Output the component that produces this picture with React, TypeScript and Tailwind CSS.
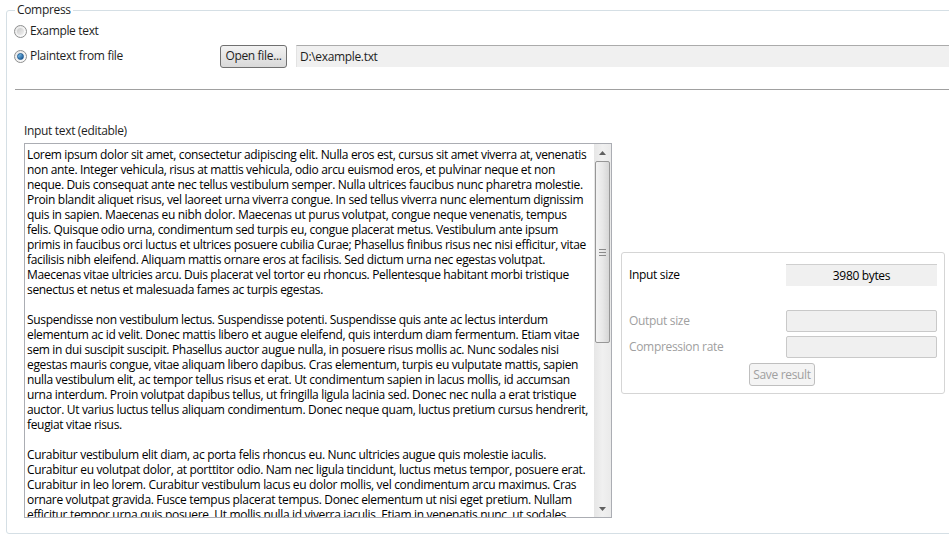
import React from "react";

const lines1 = [
  "Lorem ipsum dolor sit amet, consectetur adipiscing elit. Nulla eros est, cursus sit amet viverra at, venenatis",
  "non ante. Integer vehicula, risus at mattis vehicula, odio arcu euismod eros, et pulvinar neque et non",
  "neque. Duis consequat ante nec tellus vestibulum semper. Nulla ultrices faucibus nunc pharetra molestie.",
  "Proin blandit aliquet risus, vel laoreet urna viverra congue. In sed tellus viverra nunc elementum dignissim",
  "quis in sapien. Maecenas eu nibh dolor. Maecenas ut purus volutpat, congue neque venenatis, tempus",
  "felis. Quisque odio urna, condimentum sed turpis eu, congue placerat metus. Vestibulum ante ipsum",
  "primis in faucibus orci luctus et ultrices posuere cubilia Curae; Phasellus finibus risus nec nisi efficitur, vitae",
  "facilisis nibh eleifend. Aliquam mattis ornare eros at facilisis. Sed dictum urna nec egestas volutpat.",
  "Maecenas vitae ultricies arcu. Duis placerat vel tortor eu rhoncus. Pellentesque habitant morbi tristique",
  "senectus et netus et malesuada fames ac turpis egestas.",
  "",
  "Suspendisse non vestibulum lectus. Suspendisse potenti. Suspendisse quis ante ac lectus interdum",
  "elementum ac id velit. Donec mattis libero et augue eleifend, quis interdum diam fermentum. Etiam vitae",
  "sem in dui suscipit suscipit. Phasellus auctor augue nulla, in posuere risus mollis ac. Nunc sodales nisi",
  "egestas mauris congue, vitae aliquam libero dapibus. Cras elementum, turpis eu vulputate mattis, sapien",
  "nulla vestibulum elit, ac tempor tellus risus et erat. Ut condimentum sapien in lacus mollis, id accumsan",
  "urna interdum. Proin volutpat dapibus tellus, ut fringilla ligula lacinia sed. Donec nec nulla a erat tristique",
  "auctor. Ut varius luctus tellus aliquam condimentum. Donec neque quam, luctus pretium cursus hendrerit,",
  "feugiat vitae risus.",
  "",
  "Curabitur vestibulum elit diam, ac porta felis rhoncus eu. Nunc ultricies augue quis molestie iaculis.",
  "Curabitur eu volutpat dolor, at porttitor odio. Nam nec ligula tincidunt, luctus metus tempor, posuere erat.",
  "Curabitur in leo lorem. Curabitur vestibulum lacus eu dolor mollis, vel condimentum arcu maximus. Cras",
  "ornare volutpat gravida. Fusce tempus placerat tempus. Donec elementum ut nisi eget pretium. Nullam",
  "efficitur tempor urna quis posuere. Ut mollis nulla id viverra iaculis. Etiam in venenatis nunc, ut sodales",
];

const font = { fontFamily: '"Open Sans", "Liberation Sans", sans-serif' };

function Radio({ checked }: { checked: boolean }) {
  return (
    <span className="relative inline-flex h-[13px] w-[13px] shrink-0 items-center justify-center rounded-full border border-[#8e8f8f] bg-gradient-to-br from-[#e6e6e6] to-[#ffffff]">
      {checked ? (
        <span className="h-[7px] w-[7px] rounded-full border border-[#1d5a93] bg-gradient-to-br from-[#8ad0f6] to-[#0d4e8b]" />
      ) : (
        <span className="h-[7px] w-[7px] rounded-full bg-gradient-to-br from-[#c9c9c9] to-[#f2f2f2]" />
      )}
    </span>
  );
}

export default function App() {
  return (
    <div className="h-[540px] w-[949px] overflow-hidden bg-white text-[12px] tracking-[-0.33px] text-[#1e1e1e]" style={font}>
      <div className="relative ml-[6px] mt-[10px] h-[524px] w-[960px] rounded-[3px] border border-[#d5dfe5] pl-[7px]">
        <span className="absolute left-[8px] top-[-10px] bg-white px-[2px] leading-[18px]">Compress</span>
        <div className="mt-[12px] flex h-[16px] items-center gap-[3px]">
          <Radio checked={false} />
          <span>Example text</span>
        </div>
        <div className="mt-[5px] flex h-[24px] items-center">
          <div className="flex w-[206px] items-center gap-[3px]">
            <Radio checked={true} />
            <span>Plaintext from file</span>
          </div>
          <button className="flex h-[23px] w-[67px] items-center justify-center rounded-[3px] border border-[#707070] bg-gradient-to-b from-[#f2f2f2] to-[#d9d9d9] text-[12px]">
            Open file...
          </button>
          <div className="ml-[9px] flex h-[22px] flex-1 items-center border-t border-l border-t-[#ababab] border-l-[#e3e3e3] bg-[#f0f0f0] pl-[3px]">
            D:\example.txt
          </div>
        </div>
        <div className="ml-[1px] mt-[21px] h-0 border-t border-[#a0a0a0]" />
        <div className="flex">
          <div className="ml-[10px] flex flex-col">
            <div className="mt-[33px] leading-[16px]">Input text (editable)</div>
            <div className="mt-[4px] flex h-[375px] w-[588px] border border-[#abadb3]">
              <div className="flex-1 overflow-hidden pl-[2px] pt-[3px] leading-[15px] text-black">
                {lines1.map((l, i) => (
                  <div key={i} className="h-[15px] whitespace-nowrap">
                    {l}
                  </div>
                ))}
              </div>
              <div className="flex w-[17px] flex-col bg-gradient-to-r from-[#e6e6e6] via-[#f0f0f0] to-[#eaeaea]">
                <div className="flex h-[17px] items-center justify-center">
                  <svg width="7" height="4" viewBox="0 0 7 4"><path d="M0 4 L3.5 0 L7 4 Z" fill="#606060" /></svg>
                </div>
                <div className="mx-[1px] flex h-[182px] items-center justify-center rounded-[2px] border border-[#979797] bg-gradient-to-r from-[#f3f3f3] via-[#e8e8e8] to-[#d6d6d6]">
                  <svg width="7" height="7" viewBox="0 0 7 7">
                    <path d="M0 0.5 H7 M0 3.5 H7 M0 6.5 H7" stroke="#8a8a8a" strokeWidth="1" />
                  </svg>
                </div>
                <div className="flex-1" />
                <div className="flex h-[17px] items-center justify-center">
                  <svg width="7" height="4" viewBox="0 0 7 4"><path d="M0 0 L3.5 4 L7 0 Z" fill="#606060" /></svg>
                </div>
              </div>
            </div>
          </div>
          <div className="ml-[9px] mt-[162px] h-[142px] w-[324px] rounded-[3px] border border-[#d5d5d5] px-[7px]">
            <div className="mt-[11px] flex h-[22px] items-center justify-between">
              <span className="text-black">Input size</span>
              <div className="flex h-[22px] w-[151px] items-center justify-center border-t border-[#cfcfcf] bg-[#f0f0f0] text-black">
                3980 bytes
              </div>
            </div>
            <div className="mt-[24px] flex h-[22px] items-center justify-between text-[#a0a0a0]">
              <span>Output size</span>
              <div className="h-[22px] w-[151px] rounded-[2px] border border-[#c9c9c9] bg-[#f0f0f0]" />
            </div>
            <div className="mt-[4px] flex h-[22px] items-center justify-between text-[#a0a0a0]">
              <span>Compression rate</span>
              <div className="h-[22px] w-[151px] rounded-[2px] border border-[#c9c9c9] bg-[#f0f0f0]" />
            </div>
            <div className="mt-[5px] flex">
              <button className="ml-[120px] flex h-[23px] w-[66px] items-center justify-center rounded-[3px] border border-[#bfbfbf] bg-[#f4f4f4] text-[#a0a0a0]">
                Save result
              </button>
            </div>
          </div>
        </div>
      </div>
    </div>
  );
}
